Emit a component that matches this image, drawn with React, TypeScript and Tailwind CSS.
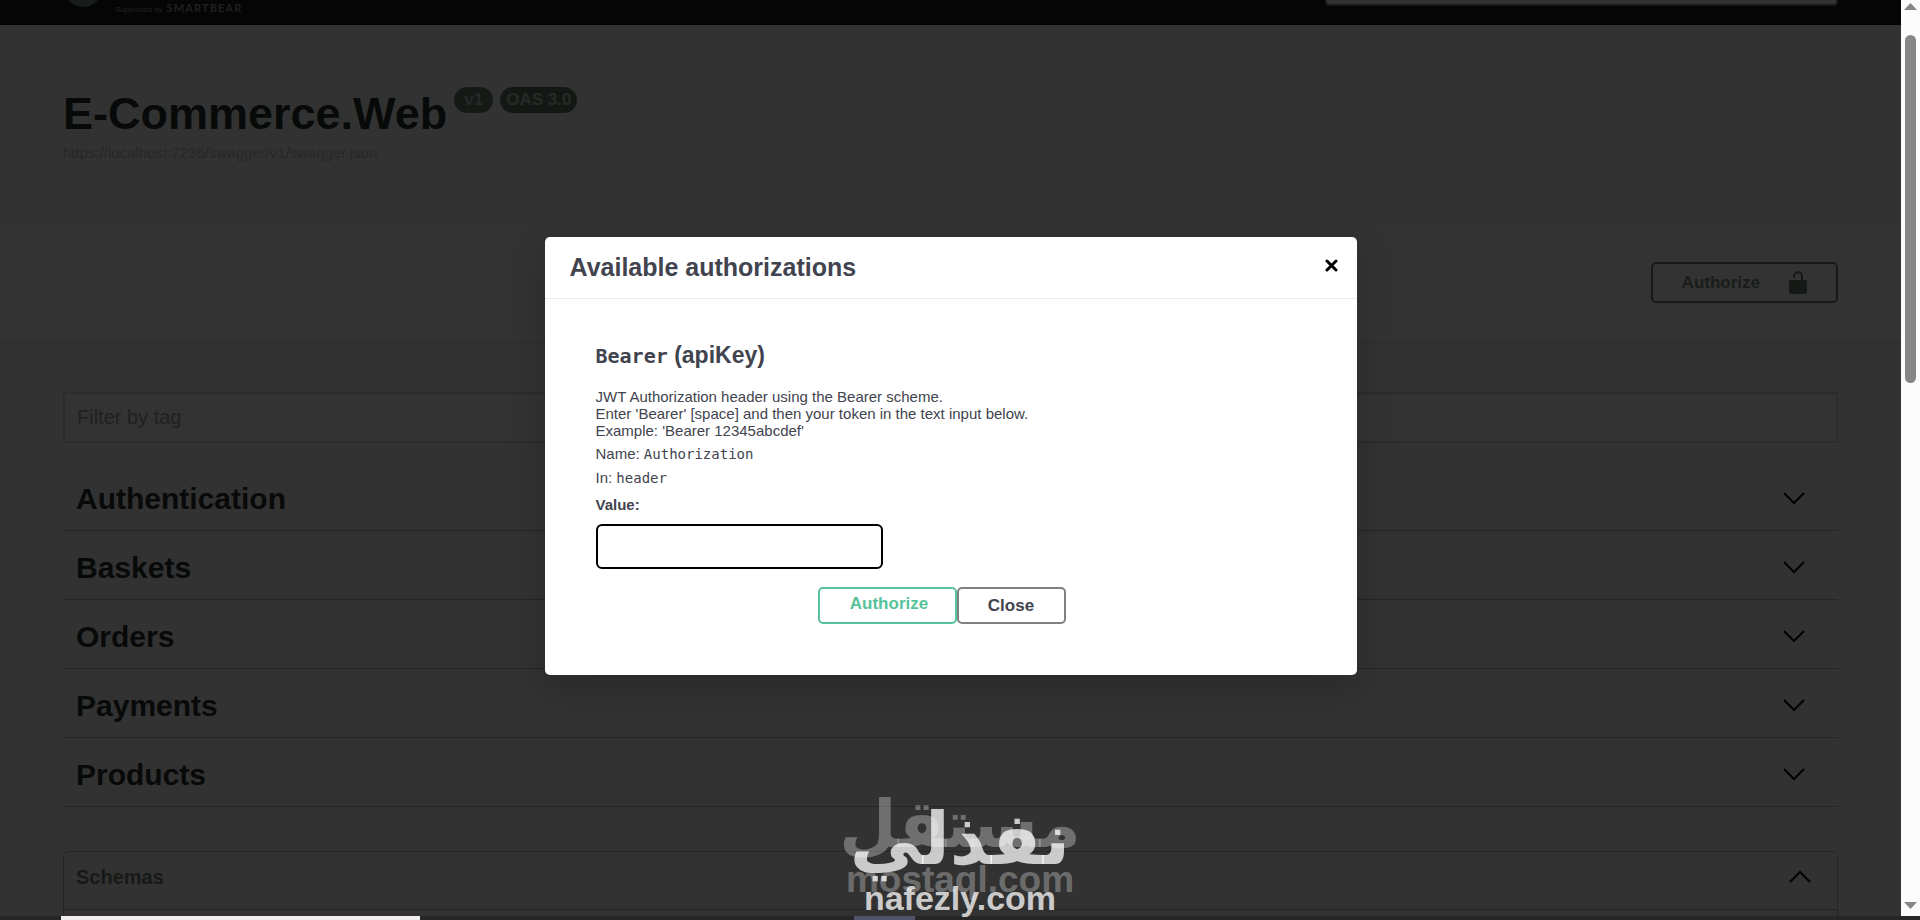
import type { ReactNode } from "react";

const tags = ["Authentication", "Baskets", "Orders", "Payments", "Products"];

interface ChevronProps {
  up?: boolean;
}

const Chevron = ({ up }: ChevronProps) => (
  <svg width="22" height="13" viewBox="0 0 22 13" fill="none" stroke="#000" strokeWidth="2">
    <path d={up ? "M1 12 11 2l10 10" : "M1 1l10 10L21 1"} />
  </svg>
);

const Unlocked = () => (
  <svg width="20" height="24" viewBox="0 0 20 24" fill="#6e806e">
    <path d="M14 10V5.500a4 4 0 0 0-8-.5V7" fill="none" stroke="#6e806e" strokeWidth="2" />
    <rect x="1" y="9" width="18" height="14" rx="2" />
  </svg>
);

const TopBar = () => (
  <header className="flex h-[25px] items-start justify-between overflow-hidden bg-[#1b1b1b] pl-[66px] pr-[63px]">
    <div className="flex items-start gap-[15px]">
      <svg width="34" height="7" viewBox="0 0 34 7">
        <circle cx="17" cy="-12" r="19" fill="#7c907c" />
      </svg>
      <p className="flex items-baseline gap-1 text-[#9a9a9a]">
        <span className="text-[8px] leading-[16px]">Supported by</span>
        <span className="font-[Lato] text-[11px] font-bold leading-[16px] tracking-widest">SMARTBEAR</span>
      </p>
    </div>
    <div className="h-[6px] w-[513px] rounded-b border-2 border-t-0 border-[#7a7a7a] bg-[#fafafa]" />
  </header>
);

const Badge = ({ className, children }: { className: string; children: ReactNode }) => (
  <span className={`rounded-full text-[17px] font-bold leading-[26px] ${className}`}>{children}</span>
);

const AuthModal = () => (
  <section
    role="dialog"
    aria-labelledby="auth-title"
    className="w-[812px] rounded-[5px] bg-white text-[15px] text-[#41444e] shadow-[0_12px_38px_rgba(0,0,0,0.2)]"
  >
    <div className="flex h-[62px] items-center justify-between border-b border-[#ebebeb] pl-[25px] pr-[19px]">
      <h3 id="auth-title" className="text-[25px] font-bold">Available authorizations</h3>
      <button aria-label="Close dialog" className="pb-1">
        <svg width="13" height="13" viewBox="0 0 13 13" stroke="#000" strokeWidth="3" strokeLinecap="round">
          <path d="M2 2l9 9M11 2l-9 9" />
        </svg>
      </button>
    </div>

    <div className="px-[51px] pb-[51px] pt-[41px]">
      <h4 className="text-[23px] font-bold leading-[30px]">
        <code className="font-['DejaVu_Sans_Mono'] text-[20px]">Bearer</code> (apiKey)
      </h4>
      <p className="mt-[17px] leading-[17px]">
        JWT Authorization header using the Bearer scheme.<br />
        Enter 'Bearer' [space] and then your token in the text input below.<br />
        Example: 'Bearer 12345abcdef'
      </p>
      <p className="mt-[3px] leading-6">
        Name: <code className="font-['DejaVu_Sans_Mono'] text-[14px]">Authorization</code>
      </p>
      <p className="leading-6">
        In: <code className="font-['DejaVu_Sans_Mono'] text-[14px]">header</code>
      </p>
      <label htmlFor="api-key" className="mt-1 block font-bold leading-[22px]">Value:</label>
      <input id="api-key" type="text" className="mt-2 block h-[45px] w-[287px] rounded-[6px] border-2 border-black px-3" />

      <div className="mt-[18px] flex justify-center pr-[18px] text-[17px] font-bold">
        <button className="h-[37px] w-[139px] rounded-[5px] border-2 border-[#56c39a] pb-1 pl-1 text-[#56c39a]">Authorize</button>
        <button className="h-[37px] w-[109px] rounded-[5px] border-2 border-[#808080]">Close</button>
      </div>
    </div>
  </section>
);

// stamp of the two marketplaces, lies over the page at the bottom
const Watermark = () => (
  <div className="pointer-events-none absolute inset-x-0 bottom-0 h-[130px] font-bold">
    <div className="absolute inset-x-0 top-0 text-center text-white/30">
      <p lang="ar" dir="rtl" className="font-['DejaVu_Sans'] text-[66px] leading-[70px]">مستقل</p>
      <p className="text-[37px] leading-[40px]">mostaql.com</p>
    </div>
    <div className="absolute inset-x-0 top-[10px] text-center text-white/75">
      <p lang="ar" dir="rtl" className="font-['DejaVu_Sans'] text-[72px] leading-[78px]">نفذلي</p>
      <p className="text-[34px] leading-[40px]">nafezly.com</p>
    </div>
  </div>
);

const App = () => {
  return (
    <div className="flex h-screen flex-col overflow-hidden bg-[#272527] font-['Liberation_Sans',sans-serif]">
      <div className="flex min-h-0 flex-1">
        <div className="relative min-w-0 flex-1 overflow-hidden bg-[#fafafa] text-[#2b3333]">
          <TopBar />

          <main>
            <div className="h-[198px] px-[63px] pt-[62px]">
              <div className="flex items-start gap-[7px]">
                <h2 className="text-[45px] font-bold leading-[54px]">E-Commerce.Web</h2>
                <Badge className="bg-[#6e826e] px-[10px] text-[#c4cec4]">v1</Badge>
                <Badge className="bg-[#647a64] px-[6px] text-[#c4cec4]">OAS 3.0</Badge>
              </div>
              <a href="#swagger" className="block text-[15px] leading-6 text-[#c0c0c0]">
                https://localhost:7236/swagger/v1/swagger.json
              </a>
            </div>

            <div className="flex h-[120px] items-center justify-end border-b border-[#d4d4d4] bg-white px-[63px]">
              <button className="flex h-[41px] items-center gap-7 rounded-[5px] border-2 border-[#6e806e] pl-[29px] pr-7 text-[17px] font-bold text-[#7d917d]">
                Authorize
                <Unlocked />
              </button>
            </div>

            <div className="px-[63px] pt-[49px]">
              <input
                type="text"
                aria-label="Filter by tag"
                placeholder="Filter by tag"
                className="block h-[51px] w-full border-2 border-[#dcdcdc] bg-white px-3 text-[20px] placeholder:text-[#a0a0a0]"
              />

              <div className="mt-[19px]">
                {tags.map((tag) => (
                  <h3 key={tag} className="flex h-[69px] items-center justify-between border-b border-[#b8b8b8] pl-[13px] pr-[33px] pt-1 text-[30px] font-bold">
                    {tag}
                    <button aria-label={`Expand ${tag}`}>
                      <Chevron />
                    </button>
                  </h3>
                ))}
              </div>

              <section className="mt-[44px] h-[120px] rounded-[5px] border border-[#b8b8b8]">
                <h4 className="flex h-[58px] items-center justify-between border-b border-[#b8b8b8] pb-2 pl-3 pr-[26px] text-[20px] font-bold text-[#708070]">
                  Schemas
                  <button aria-label="Collapse schemas">
                    <Chevron up />
                  </button>
                </h4>
              </section>
            </div>
          </main>

          <div className="absolute inset-0 flex items-center justify-center bg-black/80 pb-1">
            <AuthModal />
          </div>
        </div>

        <div className="flex w-[19px] flex-col items-center bg-[#fcfcfc] pb-[7px] pt-[3px]">
          <svg width="13" height="7" viewBox="0 0 13 7" fill="#868686">
            <path d="M0 7 6.500 0 13 7z" />
          </svg>
          <div className="mt-[25px] h-[348px] w-[11px] rounded-full bg-[#868686]" />
          <svg className="mt-auto" width="13" height="7" viewBox="0 0 13 7" fill="#868686">
            <path d="M0 0 6.500 7 13 0z" />
          </svg>
        </div>
      </div>

      {/* top edge of the taskbar */}
      <div className="flex h-1 shrink-0 pl-[61px]">
        <div className="w-[359px] bg-[#f3eeee]" />
        <div className="ml-[434px] w-[61px] bg-[#50536a]" />
      </div>

      <Watermark />
    </div>
  );
};

export default App;
